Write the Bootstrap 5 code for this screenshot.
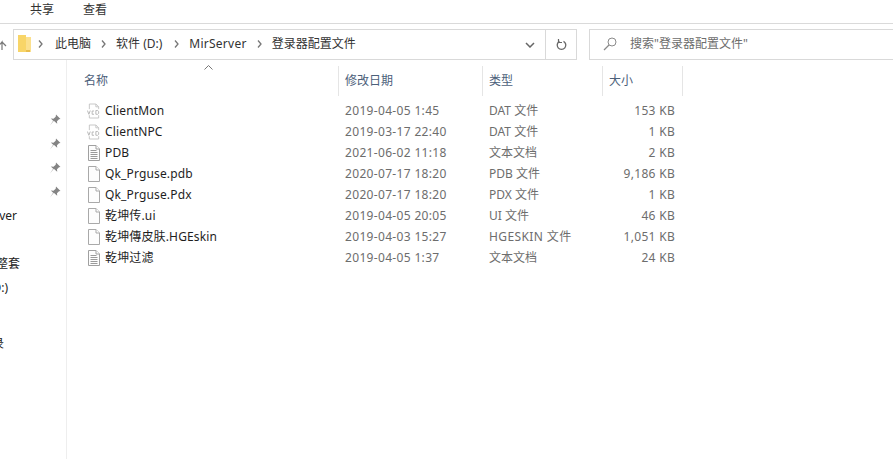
<!DOCTYPE html>
<html lang="zh-CN">
<head>
  <meta charset="UTF-8">
  <meta name="viewport" content="width=device-width, initial-scale=1.0">
  <title>登录器配置文件</title>
  <link href="https://cdn.jsdelivr.net/npm/bootstrap@5.3.0/dist/css/bootstrap.min.css" rel="stylesheet">
  <style>
    html, body { height: 100%; }
    body { font-family: "Noto Sans", "Noto Sans CJK SC", sans-serif; font-size: 12px; color: #1e1e1e; background: #fff; overflow: hidden; width: 893px; height: 459px; }
    .ribbon { height: 24px; border-bottom: 1px solid #dadada; padding-left: 30px; gap: 29px; line-height: 20px; color: #333; }
    .addr-row { height: 36px; padding-top: 5px; }
    .up-arrow { width: 13px; height: 31px; flex-shrink: 0; }
    .addr-box { width: 564px; height: 31px; border: 1px solid #d9d9d9; }
    .crumbs { padding: 0 0 2px 4px; gap: 6px; color: #333; white-space: nowrap; }
    .crumb-sep { width: 5px; height: 8px; }
    .crumb-first { margin-left: 6px; }
    .crumb-sep-wide { margin-left: 6px; }
    .crumb-wide { letter-spacing: .25px; }
    .folder-ic { width: 13px; height: 17px; margin-right: 1px; }
    .addr-end { width: 31px; border-left: 1px solid #d9d9d9; }
    .addr-drop { width: 30px; }
    .search-box { margin-left: 12px; width: 320px; height: 31px; border: 1px solid #d9d9d9; border-right: 0; color: #6d6d6d; padding: 0 0 1px 13px; gap: 13px; white-space: nowrap; flex-shrink: 0; }
    .side-pane { width: 67px; height: 399px; border-right: 1px solid #eeeeee; overflow: hidden; padding-top: 48px; flex-shrink: 0; }
    .side-row { height: 24px; padding-right: 49px; white-space: nowrap; color: #222; }
    .side-pin { padding-right: 5px; }
    .side-set { padding-right: 46px; }
    .side-disk { padding-right: 58px; }
    .side-log { padding-right: 62px; }
    .side-gap { height: 24px; }
    .side-gap-s { height: 32px; }
    .head-row { height: 30px; margin-top: 6px; color: #4c607a; }
    .col-name { width: 272px; padding-left: 17px; position: relative; }
    .col-date { width: 144px; padding-left: 6px; letter-spacing: .33px; }
    .col-kind { width: 120px; padding-left: 6px; }
    .col-size { width: 80px; padding-left: 6px; letter-spacing: .3px; }
    .head-row > div { height: 30px; border-right: 1px solid #e5e5e5; line-height: 30px; letter-spacing: 0; }
    .sort-up { position: absolute; left: 137px; top: -1px; width: 9px; height: 5px; }
    .file-list { margin-top: 4px; }
    .file-row { height: 21px; line-height: 21px; white-space: nowrap; color: #6d6d6d; }
    .file-row .col-name { padding-left: 20px; gap: 4px; color: #1e1e1e; letter-spacing: .15px; }
    .file-row .col-size { text-align: right; padding-left: 0; padding-right: 8px; }
    .wide-kind { letter-spacing: .4px; }
  </style>
</head>
<body>
  <svg width="0" height="0" class="d-block">
    <symbol id="ic-blank" viewBox="0 0 12 16"><path d="M.5.5h7.500l3.500 3.500v11.500H.5z" fill="#fdfdfd" stroke="#a9a9a9"/><path d="M8 .5v3.500h3.500" fill="#fff" stroke="#a9a9a9"/></symbol>
    <symbol id="ic-text" viewBox="0 0 12 16"><path d="M.5.5h7.500l3.500 3.500v11.500H.5z" fill="#fdfdfd" stroke="#a0a0a0"/><path d="M8 .5v3.500h3.500" fill="#fff" stroke="#a0a0a0"/><path d="M2.500 5.500h6M2.500 7.500h7M2.500 9.500h7M2.500 11.500h7M2.500 13.500h7" stroke="#9a9a9a"/></symbol>
    <symbol id="ic-vcd" viewBox="0 0 15 16"><path d="M2.500 6V.5h7l3 3V6M2.500 12.500v3h10v-3" fill="none" stroke="#c4c4c4"/><path d="M9.500.5v3h3" fill="none" stroke="#c4c4c4"/><path d="M.5 7.500l1.500 4 1.500-4M7.500 8h-2v3.500h2M9.500 7.500v4h2l1-1v-2l-1-1z" fill="none" stroke="#b5b5b5"/></symbol>
    <symbol id="ic-pin" viewBox="0 0 12 12"><path d="M7 .5l4.500 4.500-1.500.3-2 2 .2 2.500-3.400-3L1 11.500l3.200-4.700L1.800 4.500l2.700.2 2.200-2z" fill="#848484"/></symbol>
    <symbol id="ic-sep" viewBox="0 0 5 8"><path d="M1 .5L4 4 1 7.500" fill="none" stroke="#777" stroke-width="1.300"/></symbol>
  </svg>

  <div class="ribbon d-flex align-items-start">
    <span>共享</span>
    <span>查看</span>
  </div>

  <div class="addr-row d-flex align-items-start">
    <div class="up-arrow d-flex align-items-center">
      <svg width="7" height="11" viewBox="0 0 7 11"><path d="M0 5.500L2 3v8M2 3l4 4" fill="none" stroke="#777" stroke-width="1.200"/></svg>
    </div>
    <div class="addr-box d-flex align-items-stretch flex-shrink-0">
      <div class="crumbs d-flex align-items-center flex-grow-1">
        <svg class="folder-ic" viewBox="0 0 13 17"><path d="M0 0h7l1 2h5v15H0z" fill="#fbe08e"/><path d="M0 0h8v17H0z" fill="#f8d568"/><path d="M8 15h4v2H8z" fill="#e9bd4d"/></svg>
        <svg class="crumb-sep"><use href="#ic-sep"/></svg>
        <span class="crumb-first">此电脑</span>
        <svg class="crumb-sep ms-1"><use href="#ic-sep"/></svg>
        <span class="ms-1">软件 (D:)</span>
        <svg class="crumb-sep crumb-sep-wide"><use href="#ic-sep"/></svg>
        <span class="ms-1 crumb-wide">MirServer</span>
        <svg class="crumb-sep ms-1"><use href="#ic-sep"/></svg>
        <span class="ms-1">登录器配置文件</span>
      </div>
      <div class="addr-drop d-flex align-items-center justify-content-center">
        <svg width="10" height="6" viewBox="0 0 10 6"><path d="M1 1l4 4 4-4" fill="none" stroke="#666" stroke-width="1.500"/></svg>
      </div>
      <div class="addr-end d-flex align-items-center justify-content-center">
        <svg width="11" height="12" viewBox="0 0 11 12"><path d="M3.500 2.300a4.300 4.300 0 1 0 4 0" fill="none" stroke="#666" stroke-width="1.300"/><path d="M2.500 0v3.500H6" fill="none" stroke="#666" stroke-width="1.200"/></svg>
      </div>
    </div>
    <div class="search-box d-flex align-items-center">
      <svg width="14" height="14" viewBox="0 0 14 14"><circle cx="9" cy="5" r="4" fill="none" stroke="#8a8a8a"/><path d="M6 8l-5 5" stroke="#8a8a8a" stroke-width="1.200"/></svg>
      <span>搜索"登录器配置文件"</span>
    </div>
  </div>

  <div class="d-flex">
    <div class="side-pane">
      <div class="side-row side-pin d-flex justify-content-end align-items-center"><svg width="12" height="12"><use href="#ic-pin"/></svg></div>
      <div class="side-row side-pin d-flex justify-content-end align-items-center"><svg width="12" height="12"><use href="#ic-pin"/></svg></div>
      <div class="side-row side-pin d-flex justify-content-end align-items-center"><svg width="12" height="12"><use href="#ic-pin"/></svg></div>
      <div class="side-row side-pin d-flex justify-content-end align-items-center"><svg width="12" height="12"><use href="#ic-pin"/></svg></div>
      <div class="side-row d-flex justify-content-end align-items-center">MirServer</div>
      <div class="side-gap"></div>
      <div class="side-row side-set d-flex justify-content-end align-items-center">配置整套</div>
      <div class="side-row side-disk d-flex justify-content-end align-items-center"><span>软件 (D:)</span></div>
      <div class="side-gap-s"></div>
      <div class="side-row side-log d-flex justify-content-end align-items-center">记录</div>
    </div>

    <div class="flex-grow-1">
      <div class="head-row d-flex">
        <div class="col-name">名称
          <svg class="sort-up" viewBox="0 0 9 5"><path d="M.5 4.500L4.500.5l4 4" fill="none" stroke="#777"/></svg>
        </div>
        <div class="col-date">修改日期</div>
        <div class="col-kind">类型</div>
        <div class="col-size">大小</div>
      </div>

      <div class="file-list">
        <div class="file-row d-flex">
          <div class="col-name d-flex align-items-center"><svg width="14" height="16" class="flex-shrink-0"><use href="#ic-vcd"/></svg><span>ClientMon</span></div>
          <div class="col-date">2019-04-05 1:45</div><div class="col-kind">DAT 文件</div><div class="col-size">153 KB</div>
        </div>
        <div class="file-row d-flex">
          <div class="col-name d-flex align-items-center"><svg width="14" height="16" class="flex-shrink-0"><use href="#ic-vcd"/></svg><span>ClientNPC</span></div>
          <div class="col-date">2019-03-17 22:40</div><div class="col-kind">DAT 文件</div><div class="col-size">1 KB</div>
        </div>
        <div class="file-row d-flex">
          <div class="col-name d-flex align-items-center"><svg width="14" height="16" class="flex-shrink-0"><use href="#ic-text"/></svg><span>PDB</span></div>
          <div class="col-date">2021-06-02 11:18</div><div class="col-kind">文本文档</div><div class="col-size">2 KB</div>
        </div>
        <div class="file-row d-flex">
          <div class="col-name d-flex align-items-center"><svg width="14" height="16" class="flex-shrink-0"><use href="#ic-blank"/></svg><span>Qk_Prguse.pdb</span></div>
          <div class="col-date">2020-07-17 18:20</div><div class="col-kind">PDB 文件</div><div class="col-size">9,186 KB</div>
        </div>
        <div class="file-row d-flex">
          <div class="col-name d-flex align-items-center"><svg width="14" height="16" class="flex-shrink-0"><use href="#ic-blank"/></svg><span>Qk_Prguse.Pdx</span></div>
          <div class="col-date">2020-07-17 18:20</div><div class="col-kind">PDX 文件</div><div class="col-size">1 KB</div>
        </div>
        <div class="file-row d-flex">
          <div class="col-name d-flex align-items-center"><svg width="14" height="16" class="flex-shrink-0"><use href="#ic-blank"/></svg><span>乾坤传.ui</span></div>
          <div class="col-date">2019-04-05 20:05</div><div class="col-kind">UI 文件</div><div class="col-size">46 KB</div>
        </div>
        <div class="file-row d-flex">
          <div class="col-name d-flex align-items-center"><svg width="14" height="16" class="flex-shrink-0"><use href="#ic-blank"/></svg><span>乾坤傳皮肤.HGEskin</span></div>
          <div class="col-date">2019-04-03 15:27</div><div class="col-kind wide-kind">HGESKIN 文件</div><div class="col-size">1,051 KB</div>
        </div>
        <div class="file-row d-flex">
          <div class="col-name d-flex align-items-center"><svg width="14" height="16" class="flex-shrink-0"><use href="#ic-text"/></svg><span>乾坤过滤</span></div>
          <div class="col-date">2019-04-05 1:37</div><div class="col-kind">文本文档</div><div class="col-size">24 KB</div>
        </div>
      </div>
    </div>
  </div>

  <script src="https://cdn.jsdelivr.net/npm/bootstrap@5.3.0/dist/js/bootstrap.bundle.min.js"></script>
</body>
</html>
